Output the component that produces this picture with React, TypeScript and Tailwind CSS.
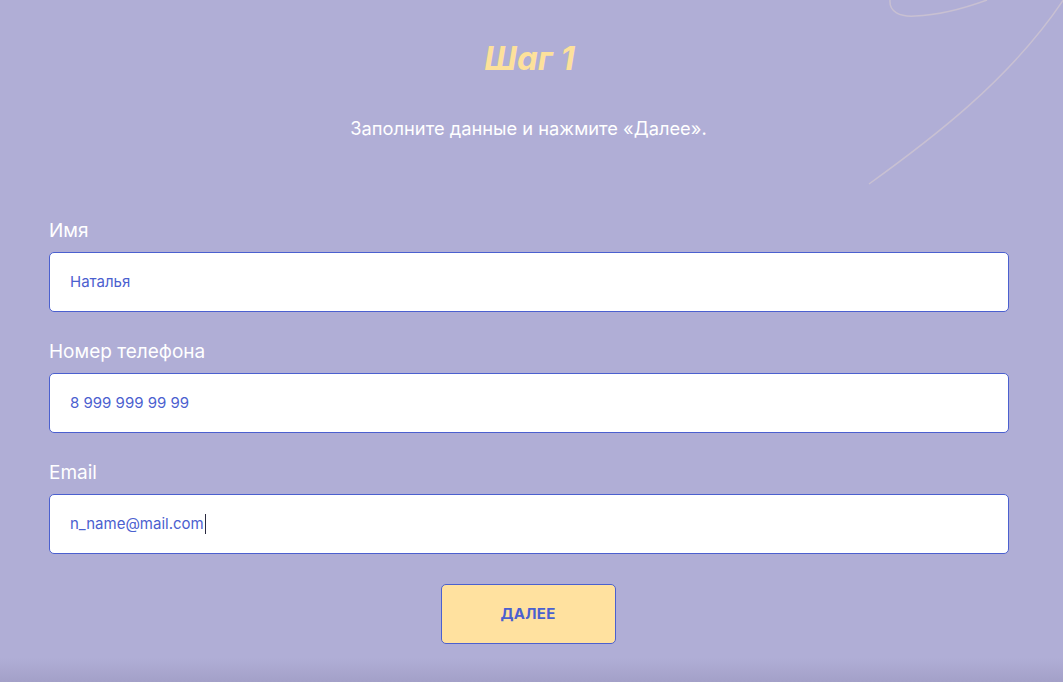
import React from 'react';

const font = { fontFamily: 'Inter, "Noto Sans", sans-serif' };

function Field({ label, value, caret }: { label: string; value: string; caret?: boolean }) {
  return (
    <div className="flex flex-col">
      <label className="text-[19px] leading-[22px] text-white mb-[10px]">{label}</label>
      <div className="h-[60px] w-full rounded-[5px] border border-[#4b60cf] bg-white flex items-center px-[20px]">
        <span className="text-[15px] text-[#4b60cf]">{value}</span>
        {caret && <span className="ml-[1px] inline-block w-px h-[20px] bg-[#2a2a40]" />}
      </div>
    </div>
  );
}

export default function App() {
  return (
    <div className="relative w-full h-[682px] overflow-hidden bg-[#b0aed6]" style={font}>
      <svg className="absolute top-0 right-0" width="200" height="190" viewBox="863 0 200 190" fill="none">
        <path d="M890 0 C889 12 900 17 915 16 C940 15 968 7 987 0" stroke="#c8c0d2" strokeWidth="1.5" />
        <path d="M869 184 C930 140 1010 80 1064 -1" stroke="#c8c0d2" strokeWidth="1.5" />
      </svg>

      <div className="relative flex flex-col items-center pt-[38px]">
        <h1 className="text-[33px] leading-[40px] font-bold italic text-[#fde19b] pr-[4px]">Шаг 1</h1>
        <p className="mt-[39px] text-[18.3px] leading-[22px] text-white pr-[6px]">Заполните данные и нажмите «Далее».</p>
      </div>

      <div className="relative ml-[49px] w-[960px] mt-[81px] flex flex-col">
        <div className="flex flex-col gap-[29px]">
          <Field label="Имя" value="Наталья" />
          <Field label="Номер телефона" value="8 999 999 99 99" />
          <Field label="Email" value="n_name@mail.com" caret />
        </div>
        <div className="flex justify-center mt-[30px] pr-[2px]">
          <button className="w-[175px] h-[60px] rounded-[5px] border border-[#4b60cf] bg-[#ffe19f] text-[15px] font-bold text-[#4b60cf] tracking-[0.3px]">
            ДАЛЕЕ
          </button>
        </div>
      </div>

      <div className="absolute bottom-0 left-0 right-0 h-[24px] bg-gradient-to-b from-transparent to-[#a3a0c8]" />
    </div>
  );
}
